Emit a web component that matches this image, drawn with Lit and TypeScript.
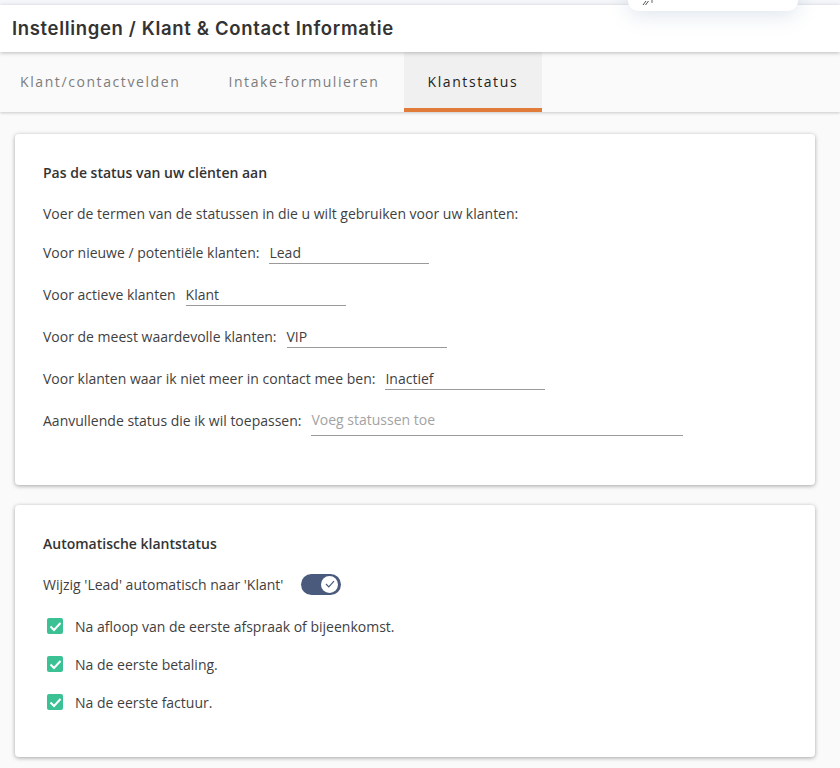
import { LitElement, html, css } from "lit";
import { customElement } from "lit/decorators.js";

@customElement("app-root")
export class AppRoot extends LitElement {
  static styles = css`
    :host {
      display: block;
      width: 840px;
      height: 768px;
      overflow: hidden;
      background: #fafafa;
      font-family: "Open Sans", sans-serif;
      font-size: 14px;
      color: #3f3f3f;
      position: relative;
    }
    .strip { height: 5px; background: #f4f6f9; }
    .header {
      height: 47px;
      background: #fff;
      box-shadow: 0 1px 4px rgba(0, 0, 0, 0.25);
      display: flex;
      align-items: center;
      padding: 0 0 1px 12px;
      box-sizing: border-box;
      position: relative;
      z-index: 2;
    }
    .title {
      font-family: Inter, sans-serif;
      font-size: 18.5px;
      font-weight: 600;
      letter-spacing: 0.66px;
      color: #333;
      white-space: nowrap;
    }
    .popover {
      position: absolute;
      left: 628px;
      top: -20px;
      width: 170px;
      height: 31px;
      background: #fff;
      border-radius: 10px;
      box-shadow: 0 5px 20px rgba(90, 120, 160, 0.18);
      z-index: 3;
    }
    .popover svg { position: absolute; left: 14px; top: 20px; }
    .tabs {
      height: 60px;
      display: flex;
      background: #fafafa;
      box-shadow: 0 1px 3px rgba(0, 0, 0, 0.2);
      position: relative;
      z-index: 1;
    }
    .tab {
      display: flex;
      align-items: center;
      padding: 0 24px;
      font-size: 14px;
      font-weight: 400;
      letter-spacing: 1.59px;
      color: #7d7d7d;
      box-sizing: border-box;
      border-bottom: 4px solid transparent;
      padding-top: 3px;
    }
    .tab:first-child { padding-left: 20px; }
    .tab.active {
      background: #f0f0f0;
      color: #222;
      border-bottom-color: #e07b39;
    }
    .content {
      padding: 22px 25px 0 15px;
      display: flex;
      flex-direction: column;
      gap: 20px;
    }
    .card {
      background: #fff;
      border-radius: 4px;
      box-shadow: 0 1px 4px rgba(0, 0, 0, 0.35);
      padding: 29px 28px 0;
      box-sizing: border-box;
    }
    .card.one { height: 351px; }
    .card.two { height: 252px; }
    h2 {
      margin: 0;
      font-size: 14px;
      font-weight: 600;
      line-height: 20px;
      color: #333;
    }
    .intro { margin: 21px 0 0; line-height: 20px; }
    .field {
      display: flex;
      align-items: flex-end;
      height: 22px;
      margin-top: 20px;
      line-height: 20px;
      white-space: nowrap;
    }
    .intro + .field { margin-top: 17px; }
    .input {
      margin-left: 10px;
      border-bottom: 1px solid #9a9a9a;
      height: 23px;
      line-height: 23px;
      box-sizing: border-box;
      position: relative;
      top: 1px;
    }
    .input.ph {
      color: #a3a3a3;
      height: 27px;
      line-height: 21px;
      top: 5px;
    }
    .toggle-row {
      display: flex;
      align-items: center;
      margin-top: 19px;
      height: 22px;
    }
    .toggle {
      margin-left: 18px;
      width: 40px;
      height: 21px;
      border-radius: 11px;
      background: #4a5a7d;
      position: relative;
    }
    .knob {
      position: absolute;
      right: 3px;
      top: 2px;
      width: 17px;
      height: 17px;
      border-radius: 50%;
      background: #fff;
      display: flex;
      align-items: center;
      justify-content: center;
    }
    .checks { margin-top: 21px; padding-left: 4px; display: flex; flex-direction: column; gap: 18px; }
    .check { display: flex; align-items: center; height: 20px; }
    .box {
      width: 16px;
      height: 16px;
      border-radius: 2px;
      background: #3cc194;
      display: flex;
      align-items: center;
      justify-content: center;
      margin-right: 12px;
    }
  `;

  private field(label: string, value: string, width: number, ph = false) {
    const style = `width:${width}px`;
    return html`<div class="field">
      <span>${label}</span>
      <span class="input ${ph ? "ph" : ""}" style=${style}>${value}</span>
    </div>`;
  }

  private check(label: string) {
    return html`<div class="check">
      <span class="box">
        <svg width="13" height="11" viewBox="0 0 13 11" fill="none">
          <path d="M1.5 5.5 L5 9 L11.5 2" stroke="#fff" stroke-width="2" />
        </svg>
      </span>
      <span>${label}</span>
    </div>`;
  }

  render() {
    return html`
      <div class="strip"></div>
      <div class="popover">
        <svg width="12" height="6" viewBox="0 0 12 6" fill="none">
          <path d="M1 5 L4 1 M3.5 5 L6.5 1" stroke="#555" stroke-width="1" />
          <path d="M10 0 v3" stroke="#999" stroke-width="1.5" />
        </svg>
      </div>
      <div class="header"><div class="title">Instellingen / Klant &amp; Contact Informatie</div></div>
      <div class="tabs">
        <div class="tab">Klant/contactvelden</div>
        <div class="tab">Intake-formulieren</div>
        <div class="tab active">Klantstatus</div>
      </div>
      <div class="content">
        <div class="card one">
          <h2>Pas de status van uw clënten aan</h2>
          <p class="intro">Voer de termen van de statussen in die u wilt gebruiken voor uw klanten:</p>
          ${this.field("Voor nieuwe / potentiële klanten:", "Lead", 160)}
          ${this.field("Voor actieve klanten", "Klant", 160)}
          ${this.field("Voor de meest waardevolle klanten:", "VIP", 160)}
          ${this.field("Voor klanten waar ik niet meer in contact mee ben:", "Inactief", 160)}
          ${this.field("Aanvullende status die ik wil toepassen:", "Voeg statussen toe", 372, true)}
        </div>
        <div class="card two">
          <h2>Automatische klantstatus</h2>
          <div class="toggle-row">
            <span>Wijzig 'Lead' automatisch naar 'Klant'</span>
            <span class="toggle">
              <span class="knob">
                <svg width="10" height="8" viewBox="0 0 10 8" fill="none">
                  <path d="M1 4 L3.8 6.8 L9 1.2" stroke="#4a5a7d" stroke-width="1.2" />
                </svg>
              </span>
            </span>
          </div>
          <div class="checks">
            ${this.check("Na afloop van de eerste afspraak of bijeenkomst.")}
            ${this.check("Na de eerste betaling.")}
            ${this.check("Na de eerste factuur.")}
          </div>
        </div>
      </div>
    `;
  }
}
